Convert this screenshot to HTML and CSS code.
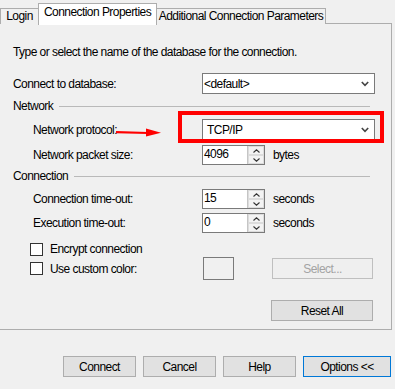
FILE: index.html
```html
<!DOCTYPE html>
<html lang="en">
<head>
    <meta charset="UTF-8">
    <title>Connect to Server | Connection Properties</title>
    <link rel="stylesheet" href="styles.css">
</head>
<body>
    <div class="tabs">
        <div class="tab">Login</div>
        <div class="tab active">Connection Properties</div>
        <div class="tab">Additional Connection Parameters</div>
    </div>

    <div class="panel">
        <p class="intro">Type or select the name of the database for the connection.</p>

        <div class="row row-db">
            <label class="label">Connect to database:</label>
            <div class="select">
                <span>&lt;default&gt;</span>
                <svg class="chevron" width="8" height="6" viewBox="0 0 8 6"><path d="M0.8 1 L4 4.4 L7.2 1" fill="none" stroke="#444" stroke-width="1.6"/></svg>
            </div>
        </div>

        <div class="group group-network"><span>Network</span><i></i></div>

        <div class="row row-protocol">
            <label class="label indent">Network protocol:</label>
            <svg class="arrow" width="48" height="12" viewBox="0 0 48 12"><path d="M1 6.2 L33 7" stroke="#f00" stroke-width="2.2" fill="none"/><path d="M31 2.5 L46 6.8 L31 10.5 Z" fill="#f00"/></svg>
            <div class="select-wrap">
                <div class="select">
                    <span class="pad">TCP/IP</span>
                    <svg class="chevron" width="8" height="6" viewBox="0 0 8 6"><path d="M0.8 1 L4 4.4 L7.2 1" fill="none" stroke="#444" stroke-width="1.6"/></svg>
                </div>
                <div class="highlight"></div>
            </div>
        </div>

        <div class="row row-packet">
            <label class="label indent">Network packet size:</label>
            <div class="spin-line">
                <div class="spin">
                    <span class="spin-value">4096</span>
                    <span class="spin-btns">
                        <b><svg width="7" height="4" viewBox="0 0 7 4"><path d="M0.5 3.5 L3.5 0.8 L6.5 3.5" fill="none" stroke="#333" stroke-width="1.1"/></svg></b>
                        <b><svg width="7" height="4" viewBox="0 0 7 4"><path d="M0.5 0.5 L3.5 3.2 L6.5 0.5" fill="none" stroke="#333" stroke-width="1.1"/></svg></b>
                    </span>
                </div>
                <span class="unit">bytes</span>
            </div>
        </div>

        <div class="group group-connection"><span>Connection</span><i></i></div>

        <div class="row row-ctimeout">
            <label class="label indent">Connection time-out:</label>
            <div class="spin-line">
                <div class="spin">
                    <span class="spin-value">15</span>
                    <span class="spin-btns">
                        <b><svg width="7" height="4" viewBox="0 0 7 4"><path d="M0.5 3.5 L3.5 0.8 L6.5 3.5" fill="none" stroke="#333" stroke-width="1.1"/></svg></b>
                        <b><svg width="7" height="4" viewBox="0 0 7 4"><path d="M0.5 0.5 L3.5 3.2 L6.5 0.5" fill="none" stroke="#333" stroke-width="1.1"/></svg></b>
                    </span>
                </div>
                <span class="unit">seconds</span>
            </div>
        </div>

        <div class="row row-etimeout">
            <label class="label indent">Execution time-out:</label>
            <div class="spin-line">
                <div class="spin">
                    <span class="spin-value">0</span>
                    <span class="spin-btns">
                        <b><svg width="7" height="4" viewBox="0 0 7 4"><path d="M0.5 3.5 L3.5 0.8 L6.5 3.5" fill="none" stroke="#333" stroke-width="1.1"/></svg></b>
                        <b><svg width="7" height="4" viewBox="0 0 7 4"><path d="M0.5 0.5 L3.5 3.2 L6.5 0.5" fill="none" stroke="#333" stroke-width="1.1"/></svg></b>
                    </span>
                </div>
                <span class="unit">seconds</span>
            </div>
        </div>

        <div class="check-row row-encrypt">
            <span class="box"></span>
            <span>Encrypt connection</span>
        </div>

        <div class="row row-color">
            <div class="check-row">
                <span class="box"></span>
                <span>Use custom color:</span>
            </div>
            <div class="color-line">
                <span class="swatch"></span>
                <button class="btn btn-disabled" disabled>Select...</button>
            </div>
        </div>

        <div class="reset-line">
            <button class="btn btn-reset">Reset All</button>
        </div>
    </div>

    <div class="footer">
        <button class="btn">Connect</button>
        <button class="btn">Cancel</button>
        <button class="btn">Help</button>
        <button class="btn btn-options">Options &lt;&lt;</button>
    </div>
</body>
</html>
```

FILE: styles.css
```css
body {
    margin: 0;
    background: #f0f0f0;
    font-family: "Liberation Sans", Arial, sans-serif;
    font-size: 12px;
    letter-spacing: -0.55px;
    color: #000;
    overflow: hidden;
}

/* tab strip */
.tabs {
    display: flex;
    align-items: flex-end;
    height: 24px;
}
.tab {
    box-sizing: border-box;
    height: 16px;
    border: 1px solid #adadad;
    border-bottom: none;
    background: #f0f0f0;
    padding: 1px 0 0;
    text-align: center;
    line-height: 13px;
    white-space: nowrap;
}
.tab:nth-child(1) { width: 39px; }
.tab:nth-child(3) { width: 170px; margin-left: -1px; }
.tab.active {
    position: relative;
    z-index: 1;
    width: 119px;
    height: 22px;
    margin-left: -1px;
    margin-bottom: -1px;
    background: #fff;
    border-color: #adadad;
    padding-top: 2px;
}

.panel {
    box-sizing: border-box;
    width: 393px;
    margin: -1px 0 0 -1px;
    border: 1px solid #adadad;
    padding: 0 0 8px 1px;
    display: flex;
    flex-direction: column;
}

.intro {
    margin: 20px 0 0 12px;
    height: 16px;
    line-height: 16px;
}

.row {
    position: relative;
    display: grid;
    grid-template-columns: 201px auto;
    align-items: center;
}
.label {
    padding-left: 12px;
}
.label.indent {
    padding-left: 32px;
}

.row-db { margin-top: 13px; height: 21px; }
.group-network { margin-top: 4px; }
.row-protocol { margin-top: 5px; height: 21px; }
.row-packet { margin-top: 5px; height: 20px; }
.group-connection { margin-top: 3px; }
.row-ctimeout { margin-top: 5px; height: 20px; }
.row-etimeout { margin-top: 4px; height: 20px; }
.row-encrypt { margin-top: 8px; height: 16px; }
.row-color { height: 23px; }

/* combo boxes */
.select {
    box-sizing: border-box;
    width: 173px;
    height: 21px;
    border: 1px solid #7a7a7a;
    background: #fff;
    display: flex;
    align-items: center;
    justify-content: space-between;
    padding: 0 5px 0 1px;
}
.select .pad {
    padding-left: 3px;
}
.select-wrap {
    position: relative;
    width: 173px;
}
.highlight {
    position: absolute;
    left: -24px;
    top: -8px;
    right: -9px;
    bottom: -3px;
    border: 4px solid #f00;
}
.arrow {
    position: absolute;
    left: 114px;
    top: 7px;
}

/* group headers */
.group {
    display: flex;
    align-items: center;
    height: 16px;
    padding: 0 21px 0 12px;
}
.group i {
    flex: 1;
    margin-left: 6px;
    margin-top: 1px;
    border-top: 1px solid #b9b9b9;
}

/* numeric up-down */
.spin-line {
    display: flex;
    align-items: center;
}
.spin {
    box-sizing: border-box;
    width: 63px;
    height: 20px;
    display: flex;
    border: 1px solid #7a7a7a;
    background: #fff;
}
.spin-value {
    flex: 1;
    padding-left: 1px;
    line-height: 17px;
}
.spin-btns {
    width: 16px;
    display: flex;
    flex-direction: column;
    border-left: 1px solid #c5c5c5;
    background: #ececec;
}
.spin-btns b {
    flex: 1;
    display: flex;
    align-items: center;
    justify-content: center;
    border: 1px solid #dcdcdc;
    background: #f3f3f3;
}
.unit {
    margin-left: 8px;
}

/* check boxes */
.check-row {
    display: flex;
    align-items: center;
    padding-left: 29px;
}
.box {
    box-sizing: border-box;
    width: 13px;
    height: 13px;
    border: 1px solid #333;
    background: #fff;
    margin-right: 7px;
}

.color-line {
    display: flex;
    align-items: center;
}
.swatch {
    box-sizing: border-box;
    width: 31px;
    height: 23px;
    border: 1px solid #7a7a7a;
    margin-left: 1px;
    margin-right: 38px;
}

/* buttons */
.btn {
    box-sizing: border-box;
    height: 21px;
    width: 73px;
    padding: 0;
    border: 1px solid #adadad;
    background: #e1e1e1;
    font-family: inherit;
    font-size: inherit;
    letter-spacing: inherit;
    color: #000;
}
.btn-disabled {
    width: 101px;
    border-color: #bfbfbf;
    background: #efefef;
    color: #a3a3a3;
}
.reset-line {
    display: flex;
    justify-content: flex-end;
    margin-top: 20px;
    padding-right: 18px;
}
.btn-reset {
    width: 102px;
}
.footer {
    display: flex;
    justify-content: flex-end;
    gap: 7px;
    margin-top: 26px;
    padding-right: 4px;
}
.btn-options {
    width: 88px;
    border-color: #0078d7;
}
```
